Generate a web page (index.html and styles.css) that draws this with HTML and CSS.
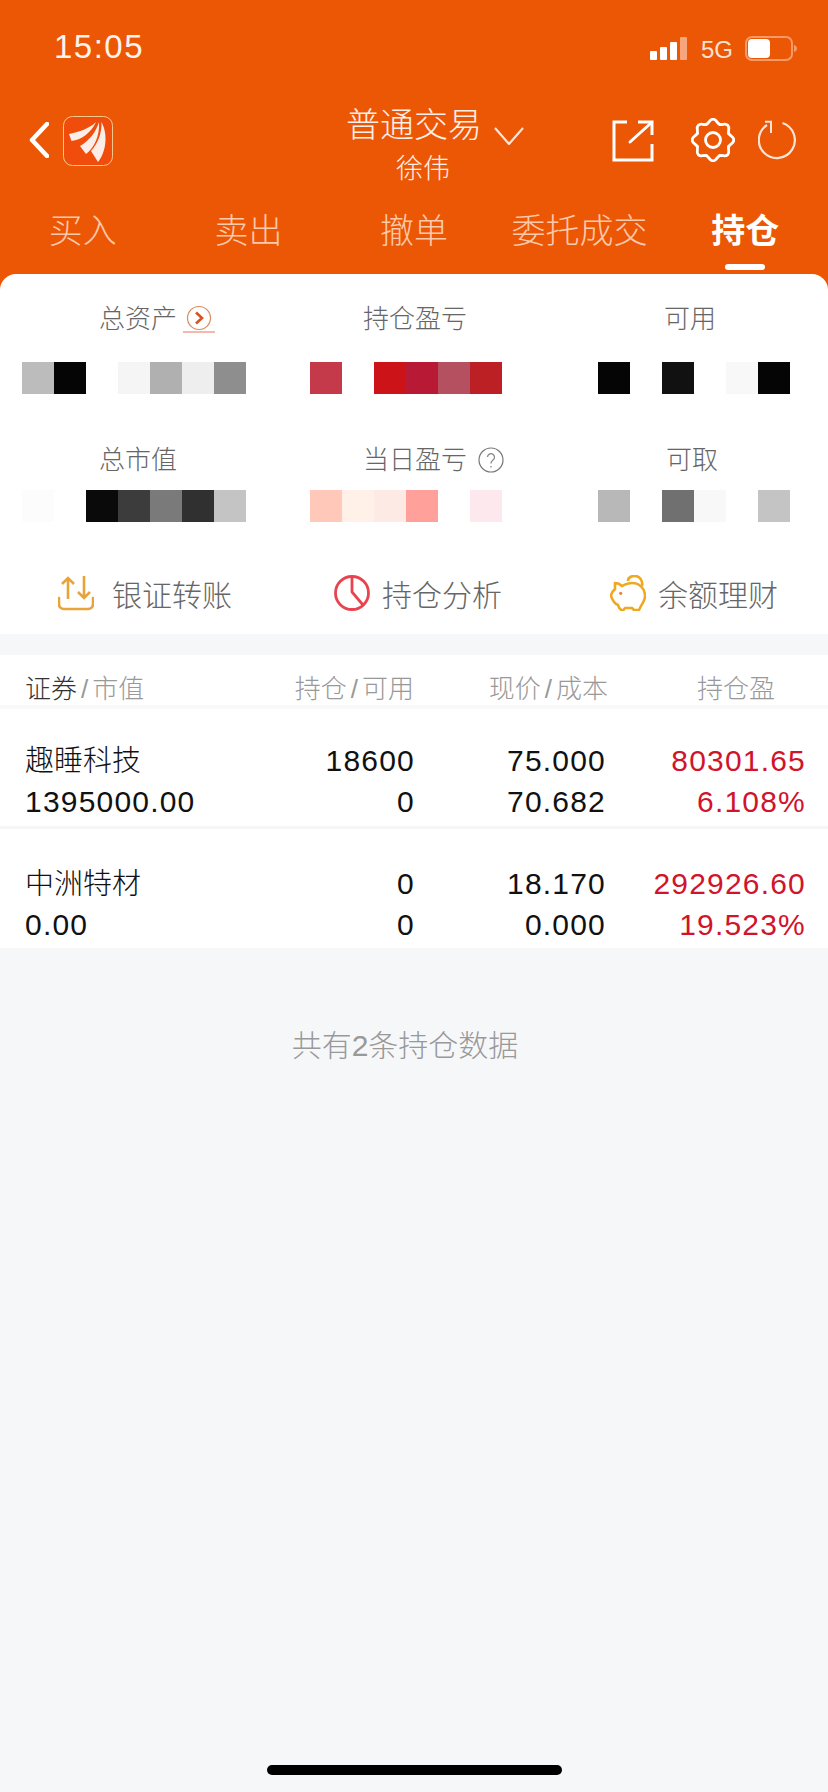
FILE: index.html
```html
<!DOCTYPE html>
<html lang="zh">
<head>
<meta charset="utf-8">
<title>持仓</title>
<link rel="stylesheet" href="styles.css">
</head>
<body>
<div class="page">
  <header class="top">
    <div class="status">
      <span class="time">15:05</span>
      <div class="status-right">
        <svg class="signal" width="37" height="23" viewBox="0 0 37 23"><g fill="#fff"><rect x="0" y="14" width="7" height="9" rx="1"/><rect x="10" y="10" width="7" height="13" rx="1"/><rect x="20" y="5" width="7" height="18" rx="1"/></g><rect x="30" y="0" width="7" height="23" rx="1" fill="#f7a67c"/></svg>
        <span class="net">5G</span>
        <svg class="battery" width="52" height="25" viewBox="0 0 52 25"><rect x="1" y="1" width="46" height="23" rx="6" fill="none" stroke="#f89a66" stroke-width="2"/><rect x="3" y="3" width="22" height="19" rx="4" fill="#fff"/><path d="M49 9c2 .6 3 2 3 3.500s-1 2.900-3 3.500z" fill="#f89a66"/></svg>
      </div>
    </div>
    <nav class="nav">
      <svg class="back" width="20" height="36" viewBox="0 0 20 36"><path d="M18 2 3 18l15 16" fill="none" stroke="#fff" stroke-width="4.500" stroke-linecap="round" stroke-linejoin="round"/></svg>
      <svg class="logo" width="50" height="50" viewBox="0 0 50 50"><rect x=".5" y=".5" width="49" height="49" rx="9" fill="#f04c0c" stroke="#f8c88c"/><path d="M33 6C26 13 15 16 6 18l2.500 7C18 24 28 17 33 6z" fill="#fbeee8"/><path d="M36 6c-3 10-10 19-19 24l6 8c8-6 14-18 13-32z" fill="#fbeee8"/><path d="M38.500 6C39 17 35 27 28 35l7 11c7-8 11-26 3.500-40z" fill="#fbeee8"/></svg>
      <div class="title-block">
        <div class="title">普通交易</div>
        <div class="subtitle">徐伟</div>
      </div>
      <svg class="caret" width="30" height="18" viewBox="0 0 30 18"><path d="M1 1l14 16L29 1" fill="none" stroke="#fbe3d6" stroke-width="2.200"/></svg>
      <svg class="share" width="42" height="42" viewBox="0 0 42 42"><path d="M15 2H2v38h38V24" fill="none" stroke="#fff" stroke-width="3"/><path d="M26 2h14v13" fill="none" stroke="#fff" stroke-width="3"/><path d="M18 22 39 3" fill="none" stroke="#fff" stroke-width="3" stroke-linecap="round"/></svg>
      <svg class="gear" width="44" height="44" viewBox="-22 -22 44 44"><defs><path id="lobe" d="M15.700-6.500C17.400-3.400 20.800-3.600 20.800 0S17.400 3.400 15.700 6.500" fill="none" stroke="#fff" stroke-width="2.800" stroke-linecap="round"/></defs><use href="#lobe"/><use href="#lobe" transform="rotate(45)"/><use href="#lobe" transform="rotate(90)"/><use href="#lobe" transform="rotate(135)"/><use href="#lobe" transform="rotate(180)"/><use href="#lobe" transform="rotate(225)"/><use href="#lobe" transform="rotate(270)"/><use href="#lobe" transform="rotate(315)"/><circle r="7.500" fill="none" stroke="#fff" stroke-width="2.800"/></svg>
      <svg class="refresh" width="38" height="40" viewBox="0 0 38 40"><path d="M24.500 3A18 18 0 1 1 9 5" fill="none" stroke="#fbe3d6" stroke-width="2.200"/><path d="M7 1.800h6V13" fill="none" stroke="#fbe3d6" stroke-width="2"/></svg>
    </nav>
    <div class="tabs">
      <div class="tab"><span class="tab-text">买入</span></div>
      <div class="tab"><span class="tab-text">卖出</span></div>
      <div class="tab"><span class="tab-text">撤单</span></div>
      <div class="tab"><span class="tab-text">委托成交</span></div>
      <div class="tab tab-active"><span class="tab-text">持仓</span><i class="tab-bar"></i></div>
    </div>
  </header>

  <section class="card">
    <div class="stats">
      <div class="stat">
        <div class="label l1"><span>总资产</span><svg class="go" width="32" height="28" viewBox="0 0 32 28"><circle cx="16" cy="13" r="11.500" fill="none" stroke="#d98a5c" stroke-width="1.200"/><path d="M13 7.500l6 5.500-6 5.500" fill="none" stroke="#d9531e" stroke-width="2.600"/><path d="M0 27h32" stroke="#f0a090" stroke-width="1.500"/></svg></div>
        <div class="mosaic"><i class="c-bc"></i><i class="c-05"></i><i></i><i class="c-f5"></i><i class="c-b0"></i><i class="c-ee"></i><i class="c-8e"></i></div>
      </div>
      <div class="stat">
        <div class="label l2"><span>持仓盈亏</span></div>
        <div class="mosaic"><i class="r-1"></i><i></i><i class="r-2"></i><i class="r-3"></i><i class="r-4"></i><i class="r-5"></i></div>
      </div>
      <div class="stat">
        <div class="label l3"><span>可用</span></div>
        <div class="mosaic"><i class="c-05"></i><i></i><i class="c-11"></i><i></i><i class="c-f8"></i><i class="c-05"></i></div>
      </div>
      <div class="stat">
        <div class="label l1"><span>总市值</span></div>
        <div class="mosaic mosaic-low"><i class="c-fc"></i><i></i><i class="c-0a"></i><i class="c-3c"></i><i class="c-7a"></i><i class="c-30"></i><i class="c-c4"></i></div>
      </div>
      <div class="stat">
        <div class="label l2"><span>当日盈亏</span><svg class="help" width="26" height="26" viewBox="0 0 26 26"><circle cx="13" cy="13" r="12" fill="none" stroke="#777" stroke-width="1.200"/><path d="M9.500 10a3.500 3.500 0 1 1 5.500 3c-1.500 1-2 1.500-2 3.500M13 19v1.500" fill="none" stroke="#888" stroke-width="1.300"/></svg></div>
        <div class="mosaic mosaic-low"><i class="p-1"></i><i class="p-2"></i><i class="p-3"></i><i class="p-4"></i><i></i><i class="p-5"></i></div>
      </div>
      <div class="stat">
        <div class="label l4"><span>可取</span></div>
        <div class="mosaic mosaic-low"><i class="c-b8"></i><i></i><i class="c-70"></i><i class="c-f8"></i><i></i><i class="c-c4"></i></div>
      </div>
    </div>
    <div class="actions">
      <div class="action">
        <svg class="action-icon wide" width="36" height="36" viewBox="0 0 36 36"><path d="M1 23v6c0 3 2 5 5 5h24c3 0 5-2 5-5v-6" fill="none" stroke="#e8a33a" stroke-width="2.600" stroke-linecap="round"/><path d="M10 24V3M4 9l6-6 6 6M26 1v22M20 17l6 6 6-6" fill="none" stroke="#e8a33a" stroke-width="2.600"/></svg>
        <span>银证转账</span>
      </div>
      <div class="action">
        <svg class="action-icon" width="36" height="36" viewBox="0 0 36 36"><circle cx="18" cy="18" r="16.500" fill="none" stroke="#e8434f" stroke-width="2.800"/><path d="M18 2v15l11 13" fill="none" stroke="#e8434f" stroke-width="2.800"/></svg>
        <span>持仓分析</span>
      </div>
      <div class="action">
        <svg class="action-icon" width="36" height="36" viewBox="0 0 36 36"><path d="M1 21C1 18 3 16 5 14V8c3 0 5 1 7 3 4-2 7-3 10-3 8 0 13 6 13 13 0 4-2 7-4 10l-2 4h-5l-2-2h-7l-2 2.500C11 35.500 9 33 8 30c-3-1-5-3-7-9z" fill="none" stroke="#f0a820" stroke-width="2.600" stroke-linejoin="round"/><path d="M18 6c0-4 4-5 7-5 5 0 8 5 7 10" fill="none" stroke="#f0a820" stroke-width="2.600"/><circle cx="10.700" cy="18.300" r="1.600" fill="#e8843a"/></svg>
        <span>余额理财</span>
      </div>
    </div>
  </section>

  <section class="table">
    <div class="grid thead">
      <div><span class="dark">证券</span><span class="slash">/</span>市值</div>
      <div class="num">持仓<span class="slash">/</span>可用</div>
      <div class="num head-price">现价<span class="slash">/</span>成本</div>
      <div class="num head-pl">持仓盈</div>
    </div>
    <div class="grid holding first">
      <div class="cell name">趣睡科技</div><div class="cell num">18600</div><div class="cell num">75.000</div><div class="cell num up">80301.65</div>
      <div class="cell">1395000.00</div><div class="cell num">0</div><div class="cell num">70.682</div><div class="cell num up">6.108%</div>
    </div>
    <div class="grid holding second">
      <div class="cell name">中洲特材</div><div class="cell num">0</div><div class="cell num">18.170</div><div class="cell num up">292926.60</div>
      <div class="cell">0.00</div><div class="cell num">0</div><div class="cell num">0.000</div><div class="cell num up">19.523%</div>
    </div>
  </section>

  <p class="summary">共有2条持仓数据</p>
  <div class="home-indicator"></div>
</div>
</body>
</html>
```
FILE: styles.css
```css
* { box-sizing: border-box; }
html, body { margin: 0; padding: 0; }
body {
  background: #f6f7f9;
  font-family: "Liberation Sans", "Noto Sans CJK SC", sans-serif;
  font-weight: 300;
  overflow: hidden;
}
.page { width: 828px; height: 1792px; display: flex; flex-direction: column; }

.top { background: #ec5705; color: #fff; height: 290px; margin-bottom: -16px; }
.status { height: 90px; display: flex; align-items: center; padding-left: 54px; }
.time { font-size: 33px; font-weight: 400; letter-spacing: 1.500px; color: #fdf3ec; padding-top: 3px; }
.status-right { margin-left: auto; padding: 6px 31px 0 0; display: flex; align-items: center; }
.signal { display: block; }
.net { font-size: 24px; margin-left: 14px; padding-top: 3px; color: #fde2d2; }
.battery { margin-left: 12px; display: block; }

.nav { height: 104px; display: flex; align-items: center; padding-left: 29px; }
.back { margin-bottom: 4px; }
.logo { margin-left: 14px; margin-bottom: 2px; }
.title-block { margin-left: 233px; width: 134px; padding-top: 9px; text-align: center; }
.title { font-size: 34px; line-height: 44px; color: #fdf0e8; white-space: nowrap; }
.subtitle { font-size: 27px; line-height: 44px; color: #fdf0e8; padding-left: 20px; }
.caret { margin-left: 14px; margin-bottom: 12px; }
.share { margin-left: 88px; margin-bottom: 2px; }
.gear { margin-left: 37px; margin-bottom: 4px; }
.refresh { margin-left: 23px; margin-bottom: 5px; }

.tabs { display: grid; grid-template-columns: repeat(5, 1fr); }
.tab { display: flex; flex-direction: column; align-items: center; height: 80px; color: #fcc9aa; }
.tab-text { font-size: 34px; line-height: 70px; margin-top: 2px; white-space: nowrap; }
.tab-active { color: #fff; font-weight: 700; }
.tab-bar { width: 40px; height: 6px; margin-top: -2px; border-radius: 3px; background: #fff; }

.card { background: #fff; border-radius: 16px 16px 0 0; position: relative; padding: 24px 0 2px; height: 360px; }
.stats { display: grid; grid-template-columns: 288px 288px 1fr; padding-left: 22px; }
.label { height: 42px; line-height: 42px; font-size: 26px; color: #666; display: flex; align-items: center; white-space: nowrap; }
.l1 { padding-left: 77px; }
.l2 { padding-left: 53px; }
.l3 { padding-left: 66px; }
.l4 { padding-left: 68px; }
.go { margin-left: 6px; }
.help { margin-left: 11px; }
.mosaic { display: flex; margin-top: 22px; margin-bottom: 45px; }
.mosaic-low { margin-top: 9px; margin-bottom: 0; }
.mosaic i { width: 32px; height: 32px; display: block; }
.c-bc { background: #bcbcbc; } .c-05 { background: #050505; } .c-f5 { background: #f5f5f5; }
.c-b0 { background: #b0b0b0; } .c-ee { background: #eeeeee; } .c-8e { background: #8e8e8e; }
.c-11 { background: #111111; } .c-f8 { background: #f8f8f8; } .c-fc { background: #fcfcfc; }
.c-0a { background: #0a0a0a; } .c-3c { background: #3c3c3c; } .c-7a { background: #7a7a7a; }
.c-30 { background: #303030; } .c-c4 { background: #c4c4c4; } .c-b8 { background: #b8b8b8; }
.c-70 { background: #707070; }
.r-1 { background: #c43a4a; } .r-2 { background: #cc1418; } .r-3 { background: #b81a35; }
.r-4 { background: #b55060; } .r-5 { background: #bc2024; }
.p-1 { background: #ffc8b8; } .p-2 { background: #fff0e8; } .p-3 { background: #fdeae4; }
.p-4 { background: #ffa09a; } .p-5 { background: #fde8ee; }

.actions { display: grid; grid-template-columns: 276px 276px 1fr; padding-left: 58px; margin-top: 33px; }
.action { display: flex; align-items: center; height: 76px; font-size: 30px; color: #666; white-space: nowrap; }
.action-icon { margin-right: 12px; flex: none; }
.action-icon.wide { margin-right: 18px; }

.table { margin-top: 21px; background: #fff; height: 293px; }
.grid { display: grid; grid-template-columns: 200px 189px 191px 200px; padding-left: 25px; }
.thead { padding-top: 17px; height: 54px; font-size: 26px; line-height: 34px; color: #999; border-bottom: 4px solid #f9f9f9; }
.dark { color: #333; }
.slash { margin: 0 4px; }
.num { text-align: right; white-space: nowrap; }
.head-price { margin-right: -3px; }
.head-pl { padding-right: 30px; }
.cell { font-size: 30px; font-weight: 400; line-height: 41px; letter-spacing: 1.200px; color: #111; white-space: nowrap; }
.cell.num { margin-right: -1px; }
.cell.name { font-size: 29px; font-weight: 300; letter-spacing: 0; padding-top: 2px; line-height: 39px; }
.up { color: #d0142c; }
.holding { align-content: start; }
.first { padding-top: 31px; height: 120px; border-bottom: 3px solid #f6f6f6; }
.second { padding-top: 34px; height: 119px; }

.summary { margin: 78px 18px 0 0; text-align: center; font-size: 30px; line-height: 40px; color: #999; }
.home-indicator { width: 295px; height: 10px; border-radius: 5px; background: #000; margin: auto auto 17px; }
```
